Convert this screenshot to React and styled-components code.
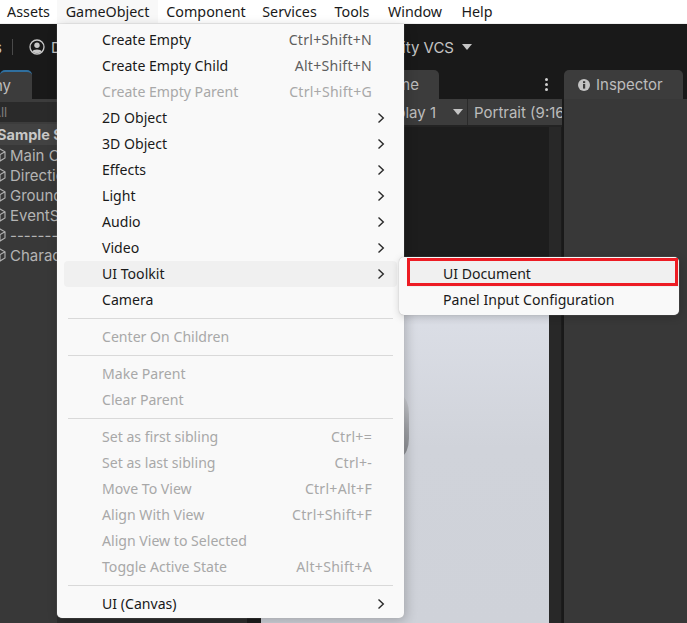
import React from "react";
import styled, { createGlobalStyle } from "styled-components";

const GlobalStyle = createGlobalStyle`
  html, body {
    margin: 0;
    padding: 0;
    background: #191919;
  }
`;

const Screen = styled.div`
  position: relative;
  width: 687px;
  height: 623px;
  overflow: hidden;
  display: flex;
  flex-direction: column;
`;

const MenuBar = styled.div`
  height: 23px;
  flex: none;
  display: flex;
  background: #fff;
  box-shadow: 0 1px 0 #f0f0f0;
  margin-bottom: 1px;
  font: 14.3px "Noto Sans", sans-serif;
  color: #1a1a1a;
`;

const BarItem = styled.div`
  display: flex;
  align-items: center;
  width: ${(p) => p.$w}px;
  justify-content: center;
  white-space: nowrap;
  background: ${(p) => (p.$open ? "#f8f8f8" : "transparent")};
`;

const Toolbar = styled.div`
  height: 46px;
  flex: none;
  display: flex;
  align-items: center;
  justify-content: space-between;
  padding-right: 215px;
  background: #191919;
  color: #c4c4c4;
  font: 15px Inter, sans-serif;
`;

const ToolGroup = styled.div`
  display: flex;
  align-items: center;
`;

const ClippedLabel = styled.span`
  margin-left: -6px;
`;

const ToolDivider = styled.div`
  width: 1px;
  height: 16px;
  margin: 0 16px 0 10px;
  background: #4a4a4a;
`;

const AccountName = styled.span`
  margin-left: 6px;
`;

const Caret = styled.span`
  width: 0;
  height: 0;
  margin-left: ${(p) => p.$gap || 8}px;
  border-left: 5.5px solid transparent;
  border-right: 5.5px solid transparent;
  border-top: 6px solid #c4c4c4;
`;

const Workspace = styled.div`
  flex: 1;
  min-height: 0;
  display: grid;
  grid-template-columns: 57px 505px 2px 123px;
  background: #191919;
  color: #bdbdbd;
  font: 15px Inter, sans-serif;
`;

const Panel = styled.div`
  display: flex;
  flex-direction: column;
  min-width: 0;
  overflow: hidden;
`;

const TabStrip = styled.div`
  height: 29px;
  flex: none;
  display: flex;
  background: #191919;
  padding-left: ${(p) => p.$inset || 0}px;
`;

const Tab = styled.div`
  width: ${(p) => p.$w}px;
  display: flex;
  align-items: center;
  justify-content: ${(p) => p.$align || "flex-end"};
  gap: 6px;
  white-space: nowrap;
  overflow: hidden;
  padding: ${(p) => p.$pad || "0"};
  box-sizing: border-box;
  background: #3c3c3c;
  border-radius: 5px 5px 0 0;
  border-top: ${(p) => (p.$active ? "2px solid #2f6f9f" : "none")};
`;

const Kebab = styled.div`
  margin-left: 106px;
  display: flex;
  flex-direction: column;
  justify-content: center;
  gap: 2px;
  span {
    width: 3px;
    height: 3px;
    border-radius: 50%;
    background: #cfcfcf;
  }
`;

const SearchRow = styled.div`
  height: 25px;
  flex: none;
  display: flex;
  align-items: center;
  background: #3c3c3c;
`;

const SearchField = styled.div`
  flex: 1;
  height: 20px;
  margin-left: -8px;
  display: flex;
  align-items: center;
  background: #2a2a2a;
  color: #7d7d7d;
  font-size: 13px;
`;

const TreeBody = styled.div`
  flex: 1;
  background: #383838;
`;

const SceneRow = styled.div`
  height: 21px;
  display: flex;
  align-items: center;
  margin-left: -3px;
  background: #424242;
  font-weight: 700;
  font-size: 14.5px;
  color: #c8c8c8;
  white-space: nowrap;
`;

const TreeRow = styled.div`
  height: 20px;
  display: flex;
  align-items: center;
  gap: 4px;
  margin-left: -6px;
  white-space: nowrap;
  color: #b4b4b4;
`;

const GameBar = styled.div`
  height: 26px;
  flex: none;
  display: flex;
  align-items: center;
  background: #3c3c3c;
  white-space: nowrap;
  overflow: hidden;
`;

const DisplayPicker = styled.div`
  width: 411px;
  flex: none;
  height: 100%;
  display: flex;
  align-items: center;
  justify-content: flex-end;
  padding-right: 4px;
  box-sizing: border-box;
  border-right: 1px solid #2a2a2a;
`;

const AspectLabel = styled.span`
  margin-left: 6px;
`;

const Viewport = styled.div`
  flex: 1;
  display: grid;
  grid-template-columns: 190px 14px 288px 13px;
  border-top: 2px solid #232323;
`;

const SideFill = styled.div`
  background: ${(p) => p.$color};
  border-right: ${(p) => (p.$line ? "1px solid #1c1c1c" : "none")};
`;

const Stage = styled.div`
  display: flex;
  flex-direction: column;
  background: #1d1d1d;
`;

const RenderArea = styled.div`
  position: relative;
  margin-top: 176px;
  flex: 1;
  background: linear-gradient(180deg, #c4c6cc 0, #dbdee6 12px, #d0d3da 45%, #cfd2d9 100%);
`;

const Capsule = styled.div`
  position: absolute;
  left: 70px;
  top: 93px;
  width: 78px;
  height: 60px;
  border-radius: 0 8px 8px 0 / 0 18px 18px 0;
  background: linear-gradient(180deg, #cfd1d6 0, #a4a6ab 55%, #8c8e93 100%);
`;

const InspectorBody = styled.div`
  flex: 1;
  background: #383838;
`;

const Menu = styled.div`
  position: absolute;
  top: 24px;
  left: 57px;
  width: 347px;
  height: 594px;
  padding-top: 3px;
  box-sizing: border-box;
  background: #f9f9f9;
  border-radius: 0 0 5px 5px;
  box-shadow: 0 0 1px #b5b5b5, 2px 3px 12px rgba(0, 0, 0, 0.22);
  font: 14.1px "Noto Sans", sans-serif;
  color: #1a1a1a;
`;

const MenuRow = styled.div`
  position: relative;
  height: 26px;
  margin: 0 7px;
  padding: 0 12px 0 38px;
  display: flex;
  align-items: center;
  border-radius: 4px;
  white-space: nowrap;
  color: ${(p) => (p.$disabled ? "#a8a8a8" : "#1a1a1a")};
  background: ${(p) => (p.$hover ? "#f0f0f0" : "transparent")};
`;

const RowLabel = styled.span`
  flex: 1;
  padding-bottom: 2px;
`;

const Shortcut = styled.span`
  color: ${(p) => (p.$disabled ? "#a8a8a8" : "#5e5e5e")};
  margin-right: 13px;
  padding-bottom: 2px;
  letter-spacing: 0.25px;
`;

const Separator = styled.div`
  height: 1px;
  margin: 5px 11px 5px 11px;
  background: #d9d9d9;
`;

const Submenu = styled.div`
  position: absolute;
  top: 233px;
  left: 342px;
  width: 280px;
  height: 58px;
  padding-top: 4px;
  box-sizing: border-box;
  background: #f9f9f9;
  border-radius: 5px;
  box-shadow: 0 0 1px #a5a5a5, 1px 2px 8px rgba(0, 0, 0, 0.2);
`;

const SubRow = styled.div`
  position: relative;
  height: 26px;
  margin-left: 8px;
  padding: 0 0 2px 36px;
  box-sizing: border-box;
  display: flex;
  align-items: center;
  white-space: nowrap;
  background: ${(p) => (p.$marked ? "#f0f0f0" : "transparent")};
  ${(p) =>
    p.$marked &&
    `&::after {
      content: "";
      position: absolute;
      top: -3px;
      left: 0;
      right: 1px;
      bottom: 1px;
      border: 3.5px solid #ed1c24;
    }`}
`;

const Chevron = () => (
  <svg width="8" height="12" viewBox="0 0 8 12" fill="none" stroke="#2a2a2a" strokeWidth="1.4">
    <path d="M1.5 1.5 L6.3 6 L1.5 10.5" />
  </svg>
);

const Cube = () => (
  <svg width="12" height="14" viewBox="0 0 12 14" fill="none" stroke="#b0b0b0" strokeWidth="1.1" style={{ flex: "none" }}>
    <path d="M6 1 L11 3.8 V10 L6 13 L1 10 V3.8 Z M1 3.8 L6 6.6 L11 3.8 M6 6.6 V13" />
  </svg>
);

const UserIcon = () => (
  <svg width="16" height="16" viewBox="0 0 16 16">
    <circle cx="8" cy="8" r="7" fill="none" stroke="#c8c8c8" strokeWidth="1.3" />
    <circle cx="8" cy="6.2" r="2.7" fill="#c8c8c8" />
    <path d="M3.2 12.6 C4 9.9 12 9.9 12.8 12.6 C11 14.6 5 14.6 3.2 12.6 Z" fill="#c8c8c8" />
  </svg>
);

const InfoIcon = () => (
  <svg width="12" height="12" viewBox="0 0 12 12" style={{ flex: "none" }}>
    <circle cx="6" cy="6" r="6" fill="#c4c4c4" />
    <rect x="5" y="5" width="2.2" height="4.6" fill="#3c3c3c" />
    <rect x="5" y="2.2" width="2.2" height="1.9" fill="#3c3c3c" />
  </svg>
);

const barItems = [
  ["Assets", 57],
  ["GameObject", 101, true],
  ["Component", 96],
  ["Services", 71],
  ["Tools", 54],
  ["Window", 72],
  ["Help", 52],
];

const treeItems = ["Main Camera", "Directional Light", "Ground", "EventSystem", "---------", "Character"];

const menuGroups = [
  [
    { label: "Create Empty", keys: "Ctrl+Shift+N" },
    { label: "Create Empty Child", keys: "Alt+Shift+N" },
    { label: "Create Empty Parent", keys: "Ctrl+Shift+G", disabled: true },
    { label: "2D Object", more: true },
    { label: "3D Object", more: true },
    { label: "Effects", more: true },
    { label: "Light", more: true },
    { label: "Audio", more: true },
    { label: "Video", more: true },
    { label: "UI Toolkit", more: true, hover: true },
    { label: "Camera" },
  ],
  [{ label: "Center On Children", disabled: true }],
  [
    { label: "Make Parent", disabled: true },
    { label: "Clear Parent", disabled: true },
  ],
  [
    { label: "Set as first sibling", keys: "Ctrl+=", disabled: true },
    { label: "Set as last sibling", keys: "Ctrl+-", disabled: true },
    { label: "Move To View", keys: "Ctrl+Alt+F", disabled: true },
    { label: "Align With View", keys: "Ctrl+Shift+F", disabled: true },
    { label: "Align View to Selected", disabled: true },
    { label: "Toggle Active State", keys: "Alt+Shift+A", disabled: true },
  ],
  [{ label: "UI (Canvas)", more: true }],
];

const App = () => {
  return (
    <Screen>
      <GlobalStyle />
      <MenuBar>
        {barItems.map(([name, w, open]) => (
          <BarItem key={name} $w={w} $open={open}>
            {name}
          </BarItem>
        ))}
      </MenuBar>
      <Toolbar>
        <ToolGroup>
          <ClippedLabel>s</ClippedLabel>
          <ToolDivider />
          <UserIcon />
          <AccountName>Dev</AccountName>
        </ToolGroup>
        <ToolGroup>
          <span>Unity VCS</span>
          <Caret />
        </ToolGroup>
      </Toolbar>
      <Workspace>
        <Panel>
          <TabStrip>
            <Tab $w={32} $active $pad="0 21px 0 0">
              Hierarchy
            </Tab>
          </TabStrip>
          <SearchRow>
            <SearchField>All</SearchField>
          </SearchRow>
          <TreeBody>
            <SceneRow>Sample Scene</SceneRow>
            {treeItems.map((name) => (
              <TreeRow key={name}>
                <Cube />
                {name}
              </TreeRow>
            ))}
          </TreeBody>
        </Panel>
        <Panel>
          <TabStrip $inset={313}>
            <Tab $w={69} $pad="0 20px 0 0">
              Game
            </Tab>
            <Kebab>
              <span />
              <span />
              <span />
            </Kebab>
          </TabStrip>
          <GameBar>
            <DisplayPicker>
              Display 1
              <Caret $gap={17} />
            </DisplayPicker>
            <AspectLabel>Portrait (9:16)</AspectLabel>
          </GameBar>
          <Viewport>
            <SideFill $color="#2d2d2d" />
            <SideFill $color="#1c1c1c" />
            <Stage>
              <RenderArea>
                <Capsule />
              </RenderArea>
            </Stage>
            <SideFill $color="#282828" $line />
          </Viewport>
        </Panel>
        <div />
        <Panel>
          <TabStrip>
            <Tab $w={119} $align="flex-start" $pad="0 0 0 14px">
              <InfoIcon />
              Inspector
            </Tab>
          </TabStrip>
          <InspectorBody />
        </Panel>
      </Workspace>
      <Menu>
        {menuGroups.map((group, i) => (
          <React.Fragment key={i}>
            {i > 0 && <Separator />}
            {group.map((item) => (
              <MenuRow key={item.label} $disabled={item.disabled} $hover={item.hover}>
                <RowLabel>{item.label}</RowLabel>
                {item.keys && <Shortcut $disabled={item.disabled}>{item.keys}</Shortcut>}
                {item.more && <Chevron />}
              </MenuRow>
            ))}
          </React.Fragment>
        ))}
        <Submenu>
          <SubRow $marked>UI Document</SubRow>
          <SubRow>Panel Input Configuration</SubRow>
        </Submenu>
      </Menu>
    </Screen>
  );
};

export default App;
